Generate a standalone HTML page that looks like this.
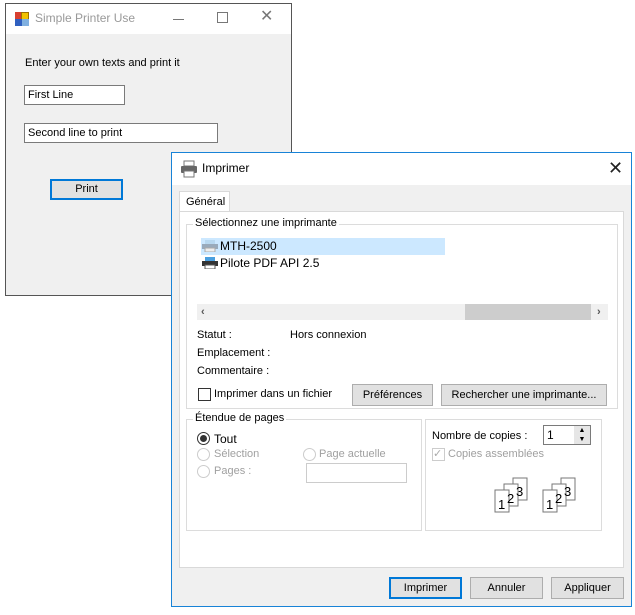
<!DOCTYPE html>
<html><head><meta charset="utf-8"><style>
*{box-sizing:border-box;margin:0;padding:0}
body{width:635px;height:615px;background:#fff;position:relative;overflow:hidden;font-family:"Liberation Sans",sans-serif;font-size:11px;color:#000}
.a{position:absolute}
.btn{position:absolute;background:#e1e1e1;border:1px solid #adadad;text-align:center;line-height:20px;font-size:11px}
.grp{position:absolute;border:1px solid #dcdcdc}
.lg{position:absolute;top:-8px;left:6px;background:#fff;padding:0 2px}
.rad{position:absolute;width:13px;height:13px;border:1px solid #ccc;border-radius:50%;background:#fff}
.dis{color:#a0a0a0}
</style></head><body>
<!-- main window -->
<div class="a" style="left:5px;top:3px;width:287px;height:293px;border:1px solid #555;background:#f0f0f0">
 <div class="a" style="left:0;top:0;width:285px;height:30px;background:#fff"></div>
 <div class="a" style="left:9px;top:8px;width:14px;height:14px">
  <div class="a" style="left:0;top:0;width:7px;height:7px;background:#d84030"></div>
  <div class="a" style="left:6px;top:0;width:8px;height:8px;background:#f2c200;border:1px solid #a07000"></div>
  <div class="a" style="left:0;top:7px;width:7px;height:7px;background:#3060c0"></div>
  <div class="a" style="left:7px;top:7px;width:7px;height:7px;background:#80b0e0"></div>
 </div>
 <div class="a" style="left:29px;top:7px;font-size:12px;color:#999">Simple Printer Use</div>
 <div class="a" style="left:167px;top:15px;width:11px;height:1px;background:#777"></div>
 <div class="a" style="left:211px;top:8px;width:11px;height:11px;border:1px solid #777"></div>
 <div class="a" style="left:254px;top:3px;font-size:16px;color:#777;line-height:20px">✕</div>
 <div class="a" style="left:19px;top:53px">Enter your own texts and print it</div>
 <div class="a" style="left:18px;top:81px;width:101px;height:20px;border:1px solid #7a7a7a;background:#fff;padding:3px 3px">First Line</div>
 <div class="a" style="left:18px;top:119px;width:194px;height:20px;border:1px solid #7a7a7a;background:#fff;padding:3px 3px">Second line to print</div>
 <div class="btn" style="left:44px;top:175px;width:73px;height:21px;border:2px solid #0078d7;line-height:17px">Print</div>
</div>
<!-- dialog -->
<div class="a" style="left:171px;top:152px;width:461px;height:455px;border:1px solid #1883d7;background:#f0f0f0">
 <div class="a" style="left:0;top:0;width:459px;height:32px;background:#fff"></div>
 <svg class="a" style="left:8px;top:7px" width="18" height="18" viewBox="0 0 18 18"><rect x="4" y="1" width="10" height="5" fill="#fff" stroke="#777"/><rect x="1" y="6" width="16" height="7" rx="1" fill="#666"/><rect x="4" y="11" width="10" height="6" fill="#fff" stroke="#777"/></svg>
 <div class="a" style="left:30px;top:8px;font-size:12px">Imprimer</div>
 <div class="a" style="left:436px;top:4px;font-size:18px;line-height:22px;color:#222">✕</div>
 <div class="a" style="left:7px;top:38px;width:51px;height:21px;background:#fff;border:1px solid #d9d9d9;border-bottom:none;padding:4px 0 0 6px">Général</div>
 <div class="a" style="left:7px;top:58px;width:445px;height:357px;background:#fff;border:1px solid #d9d9d9">
  <div class="grp" style="left:6px;top:12px;width:432px;height:185px">
   <div class="lg">Sélectionnez une imprimante</div>
   <div class="a" style="left:14px;top:13px;width:244px;height:17px;background:#cce8ff"></div>
   <svg class="a" style="left:15px;top:15px" width="16" height="12"><rect x="3" y="0" width="10" height="4" fill="#b8d8f0"/><rect x="0" y="4" width="16" height="5" fill="#9ab"/><rect x="3" y="8" width="10" height="4" fill="#eee" stroke="#aaa"/></svg>
   <div class="a" style="left:33px;top:14px;font-size:12px">MTH-2500</div>
   <svg class="a" style="left:15px;top:32px" width="16" height="12"><rect x="3" y="0" width="10" height="4" fill="#4aa0e0"/><rect x="0" y="4" width="16" height="5" fill="#333"/><rect x="3" y="8" width="10" height="4" fill="#fff" stroke="#555"/></svg>
   <div class="a" style="left:33px;top:31px;font-size:12px">Pilote PDF API 2.5</div>
   <div class="a" style="left:10px;top:79px;width:411px;height:16px;background:#f0f0f0"></div>
   <div class="a" style="left:278px;top:79px;width:126px;height:16px;background:#cdcdcd"></div>
   <div class="a" style="left:14px;top:79px;color:#555;font-weight:bold;line-height:16px">‹</div>
   <div class="a" style="left:410px;top:79px;color:#555;font-weight:bold;line-height:16px">›</div>
   <div class="a" style="left:10px;top:104px">Statut :</div>
   <div class="a" style="left:103px;top:104px">Hors connexion</div>
   <div class="a" style="left:10px;top:122px">Emplacement :</div>
   <div class="a" style="left:10px;top:140px">Commentaire :</div>
   <div class="a" style="left:11px;top:163px;width:13px;height:13px;border:1px solid #333;background:#fff"></div>
   <div class="a" style="left:27px;top:163px">Imprimer dans un fichier</div>
   <div class="btn" style="left:165px;top:159px;width:81px;height:22px">Préférences</div>
   <div class="btn" style="left:254px;top:159px;width:166px;height:22px">Rechercher une imprimante...</div>
  </div>
  <div class="grp" style="left:6px;top:207px;width:236px;height:112px">
   <div class="lg">Étendue de pages</div>
   <div class="rad" style="left:10px;top:12px;border-color:#333"><div class="a" style="left:2px;top:2px;width:7px;height:7px;border-radius:50%;background:#333"></div></div>
   <div class="a" style="left:27px;top:12px;font-size:12px">Tout</div>
   <div class="rad" style="left:10px;top:28px"></div><div class="a dis" style="left:27px;top:28px">Sélection</div>
   <div class="rad" style="left:10px;top:45px"></div><div class="a dis" style="left:27px;top:45px">Pages :</div>
   <div class="rad" style="left:116px;top:28px"></div><div class="a dis" style="left:132px;top:28px">Page actuelle</div>
   <div class="a" style="left:119px;top:43px;width:101px;height:20px;border:1px solid #ccc"></div>
  </div>
  <div class="grp" style="left:245px;top:207px;width:177px;height:112px">
   <div class="a" style="left:6px;top:10px">Nombre de copies :</div>
   <div class="a" style="left:117px;top:5px;width:48px;height:20px;border:1px solid #7a7a7a;padding:2px 3px;font-size:12px">1</div>
   <div class="a" style="left:148px;top:6px;width:16px;height:18px;background:#e6e6e6;font-size:7px;line-height:9px;text-align:center">▲<br>▼</div>
   <div class="a" style="left:6px;top:28px;width:13px;height:13px;border:1px solid #ccc;color:#aaa;font-size:11px;line-height:11px">✓</div>
   <div class="a dis" style="left:22px;top:28px">Copies assemblées</div>
   <svg class="a" style="left:68px;top:57px" width="110" height="40"><g font-family="Liberation Sans" font-size="13" stroke="#777" fill="#fff">
    <g><rect x="19" y="1" width="14" height="22"/><rect x="10" y="7" width="14" height="22"/><rect x="1" y="13" width="14" height="22"/>
    <text x="4" y="32" stroke="none" fill="#000">1</text><text x="13" y="26" stroke="none" fill="#000">2</text><text x="22" y="19" stroke="none" fill="#000">3</text></g>
    <g transform="translate(48,0)"><rect x="19" y="1" width="14" height="22"/><rect x="10" y="7" width="14" height="22"/><rect x="1" y="13" width="14" height="22"/>
    <text x="4" y="32" stroke="none" fill="#000">1</text><text x="13" y="26" stroke="none" fill="#000">2</text><text x="22" y="19" stroke="none" fill="#000">3</text></g></g></svg>
  </div>
 </div>
 <div class="btn" style="left:217px;top:424px;width:73px;height:22px;border:2px solid #0078d7;line-height:18px">Imprimer</div>
 <div class="btn" style="left:298px;top:424px;width:73px;height:22px">Annuler</div>
 <div class="btn" style="left:379px;top:424px;width:73px;height:22px">Appliquer</div>
</div>
</body></html>
